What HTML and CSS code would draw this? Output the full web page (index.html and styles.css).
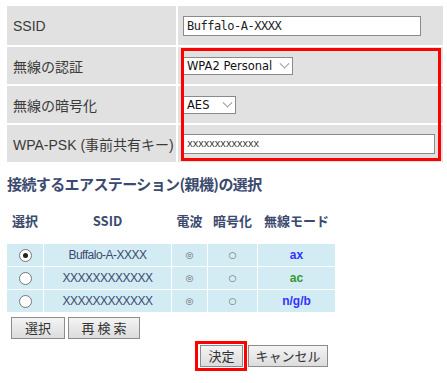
FILE: index.html
```html
<!DOCTYPE html>
<html lang="ja">
<head>
    <meta charset="UTF-8">
    <title>無線設定</title>
    <link rel="stylesheet" href="styles.css">
</head>
<body>
    <div class="settings-wrap">
        <table class="settings">
            <tr class="row-ssid">
                <th>SSID</th>
                <td><input type="text" class="text-ssid" value="Buffalo-A-XXXX"></td>
            </tr>
            <tr class="row-auth">
                <th>無線の認証</th>
                <td>
                    <div class="fake-select sel-auth">WPA2 Personal<span class="caret"></span></div>
                </td>
            </tr>
            <tr class="row-enc">
                <th>無線の暗号化</th>
                <td>
                    <div class="fake-select sel-enc">AES<span class="caret"></span></div>
                </td>
            </tr>
            <tr class="row-psk">
                <th>WPA-PSK (事前共有キー)</th>
                <td><input type="text" class="text-psk" value="xxxxxxxxxxxxx"></td>
            </tr>
        </table>
        <!-- highlight around the security fields -->
        <div class="mark mark-security"></div>
    </div>

    <h2 class="section-title">接続するエアステーション(親機)の選択</h2>

    <table class="ap-list">
        <tr class="ap-head">
            <th class="col-sel">選択</th>
            <th class="col-ssid">SSID</th>
            <th class="col-sig">電波</th>
            <th class="col-enc">暗号化</th>
            <th class="col-mode">無線モード</th>
        </tr>
        <tr class="ap-gap"><td colspan="5"></td></tr>
        <tr>
            <td><span class="radio checked"></span></td>
            <td class="ssid">Buffalo-A-XXXX</td>
            <td class="sym">◎</td>
            <td class="sym">○</td>
            <td class="mode mode-ax">ax</td>
        </tr>
        <tr>
            <td><span class="radio"></span></td>
            <td class="ssid">XXXXXXXXXXXX</td>
            <td class="sym">◎</td>
            <td class="sym">○</td>
            <td class="mode mode-ac">ac</td>
        </tr>
        <tr>
            <td><span class="radio"></span></td>
            <td class="ssid">XXXXXXXXXXXX</td>
            <td class="sym">◎</td>
            <td class="sym">○</td>
            <td class="mode mode-ngb">n/g/b</td>
        </tr>
    </table>

    <div class="list-buttons">
        <button class="btn btn-select">選択</button>
        <button class="btn btn-rescan">再 検 索</button>
    </div>

    <div class="form-buttons">
        <span class="mark-inline"><button class="btn btn-ok">決定</button></span>
        <button class="btn btn-cancel">キャンセル</button>
    </div>
</body>
</html>
```

FILE: styles.css
```css
body {
    margin: 0;
    padding: 4px 0 0 5px;
    font-family: "Liberation Sans", "Noto Sans CJK JP", sans-serif;
    color: #333333;
    background: #ffffff;
}
.settings-wrap {
    position: relative;
    width: 440px;
}
.settings {
    border-collapse: separate;
    border-spacing: 2px;
    width: 440px;
}
.settings th {
    background-color: #e1e1e1;
    text-align: left;
    font-weight: normal;
    font-size: 14px;
    color: #3a3a3a;
    padding: 0 0 0 6px;
    width: 163px;
    height: 37px;
}
.settings td {
    background-color: #e1e1e1;
    padding: 0 0 0 5px;
    height: 37px;
}
.settings .row-ssid th,
.settings .row-ssid td {
    height: 39px;
}
.settings input {
    font-family: "DejaVu Sans Mono", monospace;
    border: 1px solid #8a8a8a;
    background: #ffffff;
    margin: 0;
    padding: 0 3px;
    box-sizing: border-box;
}
.text-ssid {
    width: 238px;
    height: 20px;
    font-size: 12px;
    letter-spacing: -0.5px;
    color: #222222;
}
.text-psk {
    width: 252px;
    height: 20px;
    font-size: 10px;
    letter-spacing: -0.5px;
    color: #333333;
}
.fake-select {
    display: inline-flex;
    align-items: center;
    box-sizing: border-box;
    height: 18px;
    border: 1px solid #8a8a8a;
    background: #ffffff;
    font-family: "DejaVu Sans", sans-serif;
    font-size: 11.5px;
    color: #111111;
    padding: 0 4px 0 3px;
}
.sel-auth {
    width: 110px;
    justify-content: space-between;
}
.sel-enc {
    width: 53px;
    justify-content: space-between;
}
.caret {
    width: 6px;
    height: 6px;
    border-right: 1px solid #999999;
    border-bottom: 1px solid #999999;
    transform: rotate(45deg) translate(-2px, -2px);
}
.mark {
    position: absolute;
    border: 3px solid #ff0000;
}
.mark-security {
    left: 176px;
    top: 44px;
    width: 254px;
    height: 107px;
}

.section-title {
    margin: 9px 0 0 2px;
    font-size: 15px;
    font-weight: bold;
    color: #3b4a6e;
    font-family: "Noto Sans CJK JP", sans-serif;
    letter-spacing: -0.6px;
}

.ap-list {
    border-collapse: separate;
    border-spacing: 1px;
    margin: 15px 0 0 1px;
    width: 330px;
    font-size: 12px;
}
.ap-head th {
    font-family: "Noto Sans CJK JP", sans-serif;
    font-size: 13px;
    font-weight: bold;
    color: #3b4a6e;
    height: 20px;
    padding: 0;
}
.col-sel { width: 36px; }
.col-ssid { width: 127px; }
.col-sig { width: 35px; }
.col-enc { width: 49px; }
.ap-list td {
    background: #d3ecf4;
    text-align: center;
    height: 22px;
    padding: 0;
}
.ap-list .ap-gap td {
    background: none;
    height: 12px;
}
.ap-list .ssid {
    font-size: 12px;
    color: #3b4a6e;
    letter-spacing: -0.5px;
}
.ap-list .sym {
    font-family: "DejaVu Sans", sans-serif;
    font-size: 9px;
    color: #666666;
}
.ap-list .mode {
    font-weight: bold;
    font-size: 12px;
}
.mode-ax, .mode-ngb {
    color: #3333ff;
}
.mode-ac {
    color: #33992b;
}
.radio {
    display: inline-block;
    width: 11px;
    height: 11px;
    border: 1px solid #777777;
    border-radius: 50%;
    background: #ffffff;
    position: relative;
    vertical-align: middle;
}
.radio.checked::after {
    content: "";
    position: absolute;
    left: 3px;
    top: 3px;
    width: 5px;
    height: 5px;
    border-radius: 50%;
    background: #222222;
}

.btn {
    font-family: "Noto Sans CJK JP", sans-serif;
    font-size: 13px;
    color: #333333;
    background: linear-gradient(#f4f4f4, #dcdcdc);
    border: 1px solid #8c8c8c;
    padding: 0;
    height: 22px;
    line-height: 20px;
    margin: 0;
}
.list-buttons {
    display: flex;
    gap: 3px;
    margin: 4px 0 0 6px;
}
.btn-select { width: 54px; }
.btn-rescan { width: 72px; }
.form-buttons {
    display: flex;
    align-items: center;
    gap: 1px;
    margin: 2px 0 0 190px;
}
.mark-inline {
    display: inline-flex;
    border: 3px solid #ff0000;
    padding: 1px 1px 1px 2px;
}
.btn-ok { width: 43px; }
.btn-cancel { width: 80px; }
```
